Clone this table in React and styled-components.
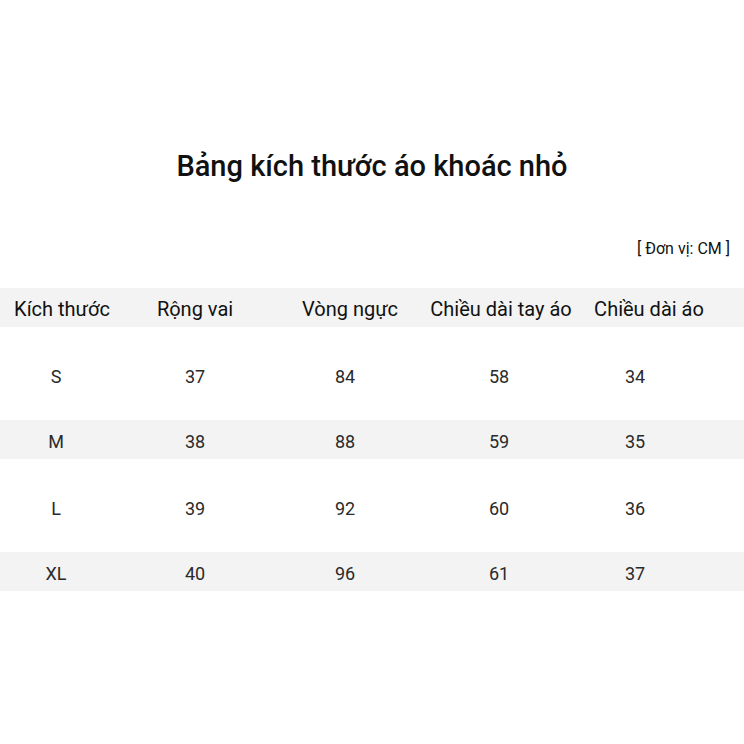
import styled, { createGlobalStyle } from "styled-components";

const GlobalStyle = createGlobalStyle`
  html, body {
    margin: 0;
    padding: 0;
    background: #ffffff;
  }
  body {
    font-family: Roboto, "Noto Sans", "Liberation Sans", sans-serif;
    color: #111;
  }
`;

const Page = styled.div`
  width: 744px;
  height: 744px;
  background: #fff;
  padding-top: 146px;
  box-sizing: border-box;
`;

const Title = styled.h1`
  margin: 0;
  text-align: center;
  font-size: 29px;
  font-weight: 500;
  line-height: 40px;
  color: #111;
`;

const Unit = styled.div`
  margin-top: 53px;
  padding-right: 14px;
  text-align: right;
  font-size: 16px;
  line-height: 20px;
  color: #111;
`;

const Table = styled.div`
  margin-top: 29px;
`;

const Row = styled.div`
  display: grid;
  grid-template-columns: ${(p) =>
    p.$head ? "124px 142px 168px 134px 162px 1fr" : "112px 166px 134px 174px 98px 1fr"};
  align-items: center;
  height: ${(p) => (p.$band ? "39px" : "93px")};
  background: ${(p) => (p.$band ? "#f3f3f3" : "#fff")};
  padding-top: ${(p) => (p.$band ? "3px" : "6px")};
  box-sizing: border-box;
`;

const HeadCell = styled.div`
  display: flex;
  justify-content: center;
  font-size: 20px;
  color: #111;
  white-space: nowrap;
`;

const Cell = styled.div`
  text-align: center;
  font-size: 18px;
  color: #2a2a2a;
`;

const headers = ["Kích thước", "Rộng vai", "Vòng ngực", "Chiều dài tay áo", "Chiều dài áo"];

const rows = [
  ["S", 37, 84, 58, 34],
  ["M", 38, 88, 59, 35],
  ["L", 39, 92, 60, 36],
  ["XL", 40, 96, 61, 37],
];

export default function App() {
  return (
    <Page>
      <GlobalStyle />
      <Title>Bảng kích thước áo khoác nhỏ</Title>
      <Unit>[ Đơn vị: CM ]</Unit>
      <Table>
        <Row $band $head>
          {headers.map((h) => (
            <HeadCell key={h}>{h}</HeadCell>
          ))}
        </Row>
        {rows.map((r, i) => (
          <Row key={r[0]} $band={i % 2 === 1}>
            {r.map((v, j) => (
              <Cell key={j}>{v}</Cell>
            ))}
          </Row>
        ))}
      </Table>
    </Page>
  );
}
